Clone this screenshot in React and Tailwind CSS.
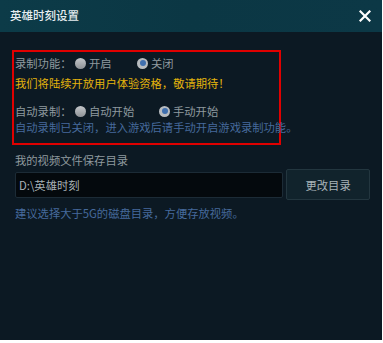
import React from "react";

function Radio({ checked }) {
  return checked ? (
    <span className="w-[11px] h-[11px] rounded-full bg-[#b8bcc0] flex items-center justify-center shrink-0">
      <span className="w-[6px] h-[6px] rounded-full bg-[#3f6fae]" />
    </span>
  ) : (
    <span className="w-[11px] h-[11px] rounded-full bg-gradient-to-b from-[#c4c7ca] to-[#8e9296] shrink-0" />
  );
}

function Option({ checked, label }) {
  return (
    <span className="flex items-center gap-[3px]">
      <Radio checked={checked} />
      <span>{label}</span>
    </span>
  );
}

export default function App() {
  return (
    <div
      className="w-[383px] h-[343px] bg-white"
      style={{ fontFamily: '"Noto Sans CJK SC", "Noto Sans", sans-serif' }}
    >
      <div className="w-[382px] h-[340px] bg-[#0c1923] flex flex-col">
        {/* header */}
        <div className="h-[32px] shrink-0 flex items-center justify-between pl-[10px] pr-[11px] bg-gradient-to-r from-[#0c3b48] via-[#0b3744] to-[#0c3846]">
          <span className="text-[11.5px] font-medium text-[#e6edf0] leading-none">英雄时刻设置</span>
          <svg width="12" height="12" viewBox="0 0 12 12" aria-hidden="true">
            <path d="M1.5 1.5l9 9M10.5 1.5l-9 9" stroke="#ffffff" strokeWidth="2.2" strokeLinecap="square" />
          </svg>
        </div>

        <div className="flex flex-col px-[12px] text-[11.3px] leading-[16px] text-[#8f999f]">
          {/* recording settings, highlighted */}
          <div className="mt-[18px] w-[269px] border-2 border-[#e00000] pl-[1px] pt-[3px] pb-[8px] flex flex-col">
            <div className="flex items-center">
              <span className="w-[60px]">录制功能：</span>
              <span className="w-[62px]"><Option label="开启" /></span>
              <Option checked label="关闭" />
            </div>
            <div className="mt-[4px] text-[#e4b40c] whitespace-nowrap">我们将陆续开放用户体验资格，敬请期待！</div>
            <div className="mt-[12px] flex items-center">
              <span className="w-[60px]">自动录制：</span>
              <span className="w-[84px]"><Option label="自动开始" /></span>
              <Option checked label="手动开始" />
            </div>
            <div className="text-[#466a9c] whitespace-nowrap">自动录制已关闭，进入游戏后请手动开启游戏录制功能。</div>
          </div>

          {/* save directory */}
          <div className="mt-[7px] pl-[3px]">我的视频文件保存目录</div>
          <div className="mt-[1px] pl-[3px] flex items-center gap-[3px] h-[31px]">
            <div className="w-[269px] h-[26px] bg-[#04090d] border border-[#1c2b36] rounded-[2px] flex items-center pl-[3px] text-[#a9b2b7]">
              D:\英雄时刻
            </div>
            <button className="w-[84px] h-[31px] bg-[#11232c] border border-[#23363f] rounded-[2px] text-[#a9b4b9] text-[11.3px]">
              更改目录
            </button>
          </div>
          <div className="mt-[5px] pl-[3px] text-[#466a9c] whitespace-nowrap">建议选择大于5G的磁盘目录，方便存放视频。</div>
        </div>
      </div>
    </div>
  );
}
